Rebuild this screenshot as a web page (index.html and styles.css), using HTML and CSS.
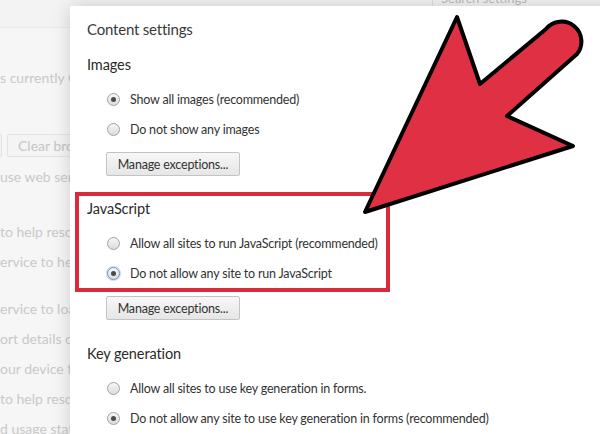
FILE: index.html
```html
<!DOCTYPE html>
<html lang="en">
<head>
    <meta charset="UTF-8">
    <meta name="viewport" content="width=device-width, initial-scale=1.0">
    <title>Content settings</title>
    <link rel="stylesheet" href="styles.css">
</head>
<body>
    <div class="backdrop">
        <div class="topbar">
            <div class="search">Search settings</div>
        </div>
        <div class="bg-content">
            <p class="line first">s currently Google Chrome</p>
            <div class="bg-buttons">
                <span class="bg-btn stub"></span>
                <span class="bg-btn">Clear browsing data...</span>
            </div>
            <p class="line single">use web services</p>
            <div class="group g1">
                <p class="line">to help resolve</p>
                <p class="line">ervice to help</p>
            </div>
            <div class="group g2">
                <p class="line">ervice to load</p>
                <p class="line">ort details of</p>
                <p class="line">our device from</p>
                <p class="line">to help resolve</p>
                <p class="line">d usage statistics</p>
            </div>
        </div>
    </div>

    <div class="dialog">
        <h1>Content settings</h1>

        <div class="section">
            <h2>Images</h2>
            <div class="options">
                <div class="option"><span class="radio checked"></span>Show all images (recommended)</div>
                <div class="option"><span class="radio"></span>Do not show any images</div>
            </div>
            <button class="btn">Manage exceptions...</button>
        </div>

        <div class="section highlight">
            <h2>JavaScript</h2>
            <div class="options">
                <div class="option"><span class="radio"></span>Allow all sites to run JavaScript (recommended)</div>
                <div class="option"><span class="radio checked focus"></span>Do not allow any site to run JavaScript</div>
            </div>
        </div>
        <button class="btn after-box">Manage exceptions...</button>

        <div class="section keygen">
            <h2>Key generation</h2>
            <div class="options">
                <div class="option"><span class="radio"></span>Allow all sites to use key generation in forms.</div>
                <div class="option"><span class="radio checked"></span>Do not allow any site to use key generation in forms (recommended)</div>
            </div>
        </div>
    </div>

    <svg class="arrow" width="600" height="434" viewBox="0 0 600 434">
        <path d="M365 212 L457 17 L480 84 L546 29 A17 17 0 0 1 577 54 L507 116 L573 146 Z"
              fill="#df3143" stroke="#000" stroke-width="4" stroke-linejoin="round"/>
    </svg>
</body>
</html>
```

FILE: styles.css
```css
body {
    margin: 0;
    width: 600px;
    height: 434px;
    overflow: hidden;
    position: relative;
    background-color: #f6f6f6;
    font-family: Lato, 'Open Sans', sans-serif;
    color: #333;
}

/* settings page behind the dialog */
.backdrop {
    color: #c9c9c9;
    font-size: 14px;
}

.topbar {
    height: 27px;
    border-bottom: 1px solid #e8e8e8;
    background-color: #f3f3f3;
    overflow: hidden;
}

.search {
    margin-left: 432px;
    margin-top: -12px;
    width: 160px;
    height: 18px;
    border: 1px solid #dcdcdc;
    padding-left: 8px;
    font-size: 13px;
    line-height: 18px;
    color: #bbb;
}

.bg-content {
    width: 70px;
    overflow: hidden;
}

.line {
    margin: 0;
    line-height: 30px;
    white-space: nowrap;
}

.line.first {
    margin-top: 35px;
}

.bg-buttons {
    display: flex;
    gap: 5px;
    margin-top: 41px;
    margin-left: -40px;
}

.bg-btn {
    flex-shrink: 0;
    height: 21px;
    border: 1px solid #e3e3e3;
    background-color: #f4f4f4;
    border-radius: 2px;
    padding: 0 10px;
    line-height: 21px;
    white-space: nowrap;
    color: #c6c6c6;
}

.bg-btn.stub {
    width: 20px;
}

.line.single {
    margin-top: 5px;
}

.group.g1 {
    margin-top: 25px;
}

.group.g2 {
    margin-top: 17px;
}

/* dialog */
.dialog {
    position: absolute;
    left: 70px;
    top: 6px;
    right: -20px;
    bottom: -20px;
    background-color: #fff;
    box-shadow: 0 0 18px rgba(0, 0, 0, 0.16);
    padding: 13px 0 0 17px;
}

.dialog h1 {
    margin: 0;
    font-size: 15px;
    font-weight: 400;
    letter-spacing: -0.2px;
    line-height: 20px;
    color: #3a3a3a;
}

.section {
    margin-top: 16px;
}

.section h2 {
    margin: 0;
    font-size: 14.5px;
    font-weight: 400;
    letter-spacing: -0.1px;
    line-height: 20px;
    color: #2a2a2a;
}

.options {
    margin-top: 9px;
    padding-left: 20px;
}

.option {
    display: flex;
    align-items: center;
    height: 30px;
    font-size: 12.5px;
    letter-spacing: -0.2px;
    color: #333;
    white-space: nowrap;
}

.radio {
    position: relative;
    flex-shrink: 0;
    box-sizing: border-box;
    width: 13px;
    height: 13px;
    margin-right: 10px;
    border: 1px solid #a2a2a2;
    border-radius: 50%;
    background: linear-gradient(#f6f6f6, #dcdcdc);
}

.radio.checked::after {
    content: '';
    position: absolute;
    inset: 3px;
    border-radius: 50%;
    background-color: #4b4b4b;
}

.radio.focus {
    border-color: #6d8fce;
    box-shadow: 0 0 0 1px rgba(109, 143, 206, 0.35);
}

.btn {
    display: block;
    margin: 8px 0 0 19px;
    width: 134px;
    height: 24px;
    padding: 0;
    border: 1px solid #c3c3c3;
    border-radius: 2px;
    background: linear-gradient(#f7f7f7, #e6e6e6);
    font-family: inherit;
    font-size: 12.5px;
    letter-spacing: -0.2px;
    color: #333;
}

.section.highlight {
    box-sizing: border-box;
    width: 315px;
    margin-left: -12px;
    border: 4px solid #d82a3b;
    padding: 3px 0 0 8px;
}

.btn.after-box {
    margin-top: 4px;
}

.section.keygen {
    margin-top: 24px;
}

/* annotation arrow */
.arrow {
    position: absolute;
    left: 0;
    top: 0;
    pointer-events: none;
}
```
